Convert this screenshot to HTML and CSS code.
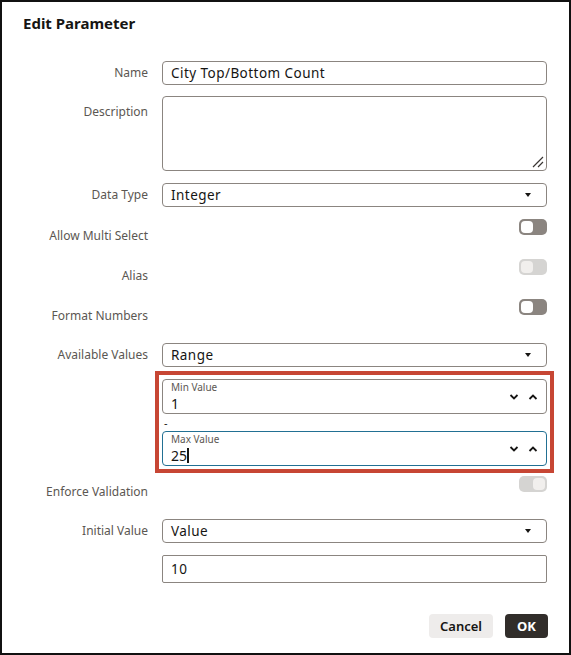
FILE: index.html
```html
<!DOCTYPE html>
<html>
<head>
<meta charset="utf-8">
<link rel="stylesheet" href="styles.css">
</head>
<body>
<div class="dialog">
  <h1 class="title">Edit Parameter</h1>
  <div class="form">
    <div class="row r-name">
      <div class="label">Name</div>
      <div class="field"><div class="input">City Top/Bottom Count</div></div>
    </div>
    <div class="row r-desc">
      <div class="label label-top">Description</div>
      <div class="field">
        <div class="textarea">
          <svg class="grip" width="12" height="12" viewBox="0 0 12 12"><path d="M11 1 L1 11 M11 6 L6 11" stroke="#3a3633" stroke-width="1.2" fill="none"/></svg>
        </div>
      </div>
    </div>
    <div class="row r-type">
      <div class="label">Data Type</div>
      <div class="field"><div class="input select">Integer<span class="caret"></span></div></div>
    </div>
    <div class="row r-toggle">
      <div class="label label-toggle">Allow Multi Select</div>
      <div class="field field-toggle"><span class="toggle"><span class="knob"></span></span></div>
    </div>
    <div class="row r-toggle">
      <div class="label label-toggle">Alias</div>
      <div class="field field-toggle"><span class="toggle disabled"><span class="knob"></span></span></div>
    </div>
    <div class="row r-toggle r-last-toggle">
      <div class="label label-toggle">Format Numbers</div>
      <div class="field field-toggle"><span class="toggle"><span class="knob"></span></span></div>
    </div>
    <div class="row r-avail">
      <div class="label">Available Values</div>
      <div class="field"><div class="input select">Range<span class="caret"></span></div></div>
    </div>
    <div class="row r-range">
      <div class="label"></div>
      <div class="field">
        <div class="range-box">
          <div class="num">
            <div class="num-text">
              <div class="num-label">Min Value</div>
              <div class="num-value">1</div>
            </div>
            <div class="spin">
              <svg width="10" height="8" viewBox="0 0 10 8"><path d="M1.5 2 L5 5.5 L8.5 2" stroke="#161513" stroke-width="1.8" fill="none"/></svg>
              <svg width="10" height="8" viewBox="0 0 10 8"><path d="M1.5 6 L5 2.5 L8.5 6" stroke="#161513" stroke-width="1.8" fill="none"/></svg>
            </div>
          </div>
          <div class="dash">-</div>
          <div class="num focused">
            <div class="num-text">
              <div class="num-label">Max Value</div>
              <div class="num-value">25<span class="cursor"></span></div>
            </div>
            <div class="spin">
              <svg width="10" height="8" viewBox="0 0 10 8"><path d="M1.5 2 L5 5.5 L8.5 2" stroke="#161513" stroke-width="1.8" fill="none"/></svg>
              <svg width="10" height="8" viewBox="0 0 10 8"><path d="M1.5 6 L5 2.5 L8.5 6" stroke="#161513" stroke-width="1.8" fill="none"/></svg>
            </div>
          </div>
        </div>
      </div>
    </div>
    <div class="row r-enforce">
      <div class="label label-enforce">Enforce Validation</div>
      <div class="field field-toggle"><span class="toggle disabled on"><span class="knob"></span></span></div>
    </div>
    <div class="row r-init">
      <div class="label">Initial Value</div>
      <div class="field"><div class="input select">Value<span class="caret"></span></div></div>
    </div>
    <div class="row r-value">
      <div class="label"></div>
      <div class="field"><div class="input tall">10</div></div>
    </div>
  </div>
  <div class="footer">
    <button class="btn btn-cancel">Cancel</button>
    <button class="btn btn-ok">OK</button>
  </div>
</div>
</body>
</html>
```
FILE: styles.css
```css
* { box-sizing: border-box; }
html, body { margin: 0; padding: 0; background: #fff; }
body { font-family: "Noto Sans", "Open Sans", sans-serif; color: #161513; }

.dialog {
  width: 571px;
  height: 655px;
  border: 2px solid #111;
  padding: 11px 0 0 21px;
  background: #fff;
}

.title {
  margin: 0;
  font-size: 15px;
  line-height: 20px;
  font-weight: 700;
  color: #161513;
}

.form {
  margin-top: 28px;
  display: flex;
  flex-direction: column;
}

.row {
  display: grid;
  grid-template-columns: 125px 385px;
  column-gap: 14px;
  align-items: start;
}

.label {
  text-align: right;
  font-size: 12px;
  line-height: 24px;
  color: #5b5752;
  white-space: nowrap;
}
.label-top { padding-top: 4px; }
.label-toggle { padding-top: 5px; }
.label-enforce { padding-top: 4px; }

.r-name { margin-bottom: 11px; }
.r-desc { margin-bottom: 12px; }
.r-type { margin-bottom: 12px; }
.r-toggle { margin-bottom: 11px; }
.r-last-toggle { margin-bottom: 15px; }
.r-avail { margin-bottom: 4px; }
.r-range { margin-bottom: 3px; }
.r-enforce { margin-bottom: 15px; }
.r-init { margin-bottom: 12px; }

.input {
  height: 24px;
  border: 1px solid #8b8580;
  border-radius: 4px;
  padding: 0 8px;
  font-size: 13.5px;
  letter-spacing: 0.45px;
  line-height: 22px;
  color: #161513;
  position: relative;
}
.input.tall { height: 28px; line-height: 26px; border-radius: 2px; }

.select .caret {
  position: absolute;
  right: 15px;
  top: 9px;
  width: 0;
  height: 0;
  border-left: 3.5px solid transparent;
  border-right: 3.5px solid transparent;
  border-top: 4px solid #161513;
}

.textarea {
  height: 75px;
  border: 1px solid #8b8580;
  border-radius: 4px;
  position: relative;
}
.grip {
  position: absolute;
  right: 2px;
  bottom: 2px;
}

.field-toggle {
  display: flex;
  justify-content: flex-end;
}
.toggle {
  width: 28px;
  height: 16px;
  border-radius: 5px;
  background: #8b8580;
  position: relative;
  display: block;
}
.toggle .knob {
  position: absolute;
  left: 2px;
  top: 2px;
  width: 12px;
  height: 12px;
  border-radius: 4px;
  background: #fff;
}
.toggle.disabled { background: #d5d4d2; }
.toggle.disabled .knob { background: #f1efed; }
.toggle.on .knob { left: 14px; }

.range-box {
  margin: 0 -7px;
  border: 4px solid #c74634;
  padding: 4px 3px 3px 3px;
}
.num {
  height: 35px;
  border: 1px solid #8b8580;
  border-radius: 4px;
  display: flex;
  align-items: flex-start;
  padding: 0 8px;
}
.num.focused { border-color: #227093; }
.num-text { flex: 1; }
.num-label {
  font-size: 10px;
  line-height: 14px;
  color: #5b5752;
}
.num-value {
  font-size: 14px;
  line-height: 19px;
  color: #161513;
  display: flex;
  align-items: center;
}
.cursor {
  display: inline-block;
  width: 1.5px;
  height: 15px;
  background: #161513;
}
.spin {
  display: flex;
  gap: 9px;
  margin-top: 13px;
}
.spin svg { display: block; }

.dash {
  height: 17px;
  font-size: 11px;
  line-height: 17px;
  padding-left: 2px;
  color: #161513;
}

.footer {
  width: 525px;
  margin-top: 31px;
  display: flex;
  justify-content: flex-end;
  gap: 12px;
}
.btn {
  height: 24px;
  border: none;
  border-radius: 4px;
  font-family: "Noto Sans", "Open Sans", sans-serif;
  font-size: 13px;
  font-weight: 600;
  line-height: 24px;
  padding: 0;
}
.btn-cancel { width: 64px; background: #eeeceb; color: #161513; }
.btn-ok { width: 43px; background: #312d2a; color: #fff; font-weight: 700; }
```
